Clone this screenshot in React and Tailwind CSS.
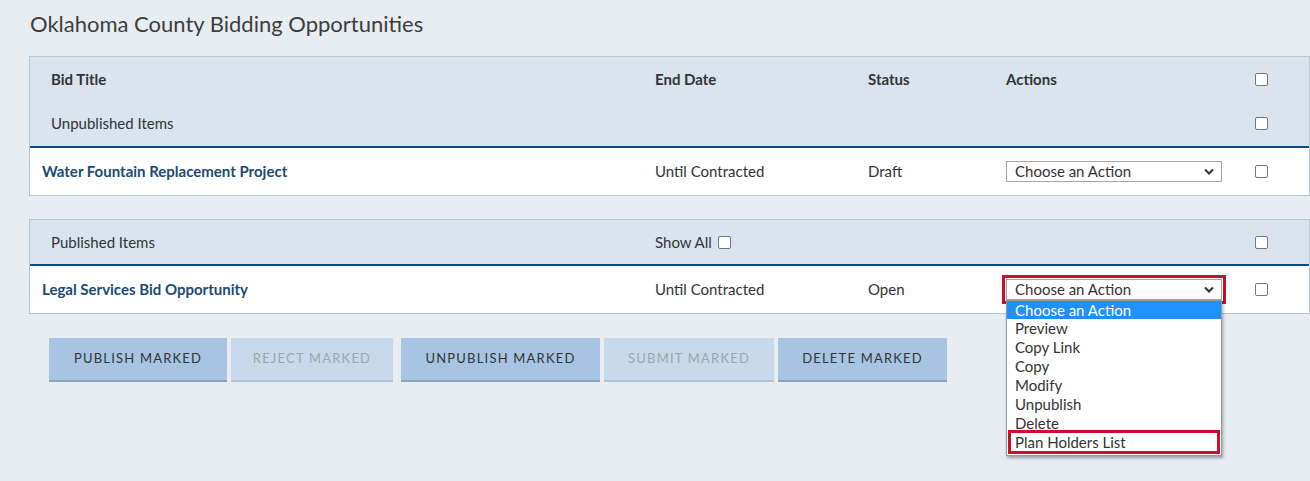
import React from 'react';

const FONT = { fontFamily: 'Lato, "Noto Sans", sans-serif' };

const ACTIONS = ['Choose an Action', 'Preview', 'Copy Link', 'Copy', 'Modify', 'Unpublish', 'Delete', 'Plan Holders List'];

const Check = () => (
  <span className="inline-block w-[13px] h-[13px] rounded-[2px] border border-[#767676] bg-white" />
);

const Chevron = () => (
  <svg width="10" height="7" viewBox="0 0 10 7" className="text-[#333]">
    <path d="M1 1.5 L5 5.5 L9 1.5" fill="none" stroke="currentColor" strokeWidth="2" />
  </svg>
);

const SelectBox = ({ highlight }) => (
  <div
    className={
      'w-[216px] h-[21px] flex items-center justify-between pl-[8px] pr-[7px] bg-white border border-[#a6a6a6] text-[15px] text-[#333] ' +
      (highlight ? 'outline-[3px] outline-solid outline-[#c8102e] outline-offset-[1px]' : '')
    }
  >
    <span>Choose an Action</span>
    <Chevron />
  </div>
);

const DropList = () => (
  <div className="absolute left-0 top-[21px] w-[216px] bg-white border border-[#9a9a9a] shadow-[1px_2px_3px_rgba(0,0,0,0.35)] text-[15px] text-[#333] z-10">
    {ACTIONS.map((a, i) => {
      let cls = 'h-[19px] leading-[19px] pl-[8px]';
      if (i === 0) cls = 'h-[18px] leading-[18px] pl-[8px] bg-[#1e90ff] text-white';
      if (i === ACTIONS.length - 1)
        cls = 'h-[24px] leading-[18px] pl-[4px] -mt-[3px] mx-[1px] mb-[1px] border-[3px] border-[#c8102e] bg-white';
      return (
        <div key={a} className={cls}>
          {a}
        </div>
      );
    })}
  </div>
);

const Row = ({ children, className }) => (
  <div className={'flex items-center ' + className}>{children}</div>
);

const Cols = ({ a, b, c, d, e, aClass = 'pl-[21px]' }) => (
  <>
    <div className={'w-[625px] ' + aClass}>{a}</div>
    <div className="w-[213px]">{b}</div>
    <div className="w-[138px]">{c}</div>
    <div className="w-[249px] relative">{d}</div>
    <div className="flex-1 flex items-center">{e}</div>
  </>
);

const Button = ({ label, disabled, w, className = '' }) => (
  <div
    className={
      'h-[44px] flex items-center justify-center text-[13px] tracking-[1.2px] uppercase border-b-2 ' +
      (disabled
        ? 'bg-[#c7d9ea] border-[#b3c4d6] text-[#9ca5ad]'
        : 'bg-[#a7c5e3] border-[#8aa3bd] text-[#333]') +
      ' ' + w + ' ' + className
    }
  >
    {label}
  </div>
);

export default function App() {
  return (
    <div className="w-[1310px] h-[481px] bg-[#e8edf2] overflow-hidden text-[#333]" style={FONT}>
      <h1 className="pl-[30px] pt-[10px] h-[56px] text-[22px] text-[#3d3d3d] font-normal leading-[28px]">
        Oklahoma County Bidding Opportunities
      </h1>

      <div className="ml-[29px] w-[1281px] border border-[#b6c4d4] bg-white">
        <div className="bg-[#dae4ef] text-[15px]">
          <Row className="h-[44px]">
            <Cols
              a={<span className="font-bold">Bid Title</span>}
              b={<span className="font-bold">End Date</span>}
              c={<span className="font-bold">Status</span>}
              d={<span className="font-bold">Actions</span>}
              e={<Check />}
            />
          </Row>
          <Row className="h-[45px]">
            <Cols a={<span>Unpublished Items</span>} e={<Check />} />
          </Row>
        </div>
        <div className="h-[2px] bg-[#0f4a7c]" />
        <Row className="h-[47px] text-[15px]">
          <Cols
            aClass="pl-[12px]"
            a={<span className="font-bold text-[#1c4a74]">Water Fountain Replacement Project</span>}
            b={<span>Until Contracted</span>}
            c={<span>Draft</span>}
            d={<SelectBox />}
            e={<Check />}
          />
        </Row>
      </div>

      <div className="ml-[29px] mt-[23px] w-[1281px] border border-[#b6c4d4] bg-white">
        <div className="bg-[#dae4ef] text-[15px]">
          <Row className="h-[44px]">
            <Cols
              a={<span>Published Items</span>}
              b={
                <span className="flex items-center gap-[6px]">
                  Show All <Check />
                </span>
              }
              e={<Check />}
            />
          </Row>
        </div>
        <div className="h-[2px] bg-[#0f4a7c]" />
        <Row className="h-[47px] text-[15px]">
          <Cols
            aClass="pl-[12px]"
            a={<span className="font-bold text-[#1c4a74]">Legal Services Bid Opportunity</span>}
            b={<span>Until Contracted</span>}
            c={<span>Open</span>}
            d={
              <div className="relative w-[216px]">
                <SelectBox highlight />
                <DropList />
              </div>
            }
            e={<Check />}
          />
        </Row>
      </div>

      <div className="flex pl-[49px] mt-[24px]">
        <Button label="Publish Marked" w="w-[178px]" />
        <Button label="Reject Marked" w="w-[162px]" disabled className="ml-[4px]" />
        <Button label="Unpublish Marked" w="w-[199px]" className="ml-[8px]" />
        <Button label="Submit Marked" w="w-[170px]" disabled className="ml-[4px]" />
        <Button label="Delete Marked" w="w-[169px]" className="ml-[4px]" />
      </div>
    </div>
  );
}
